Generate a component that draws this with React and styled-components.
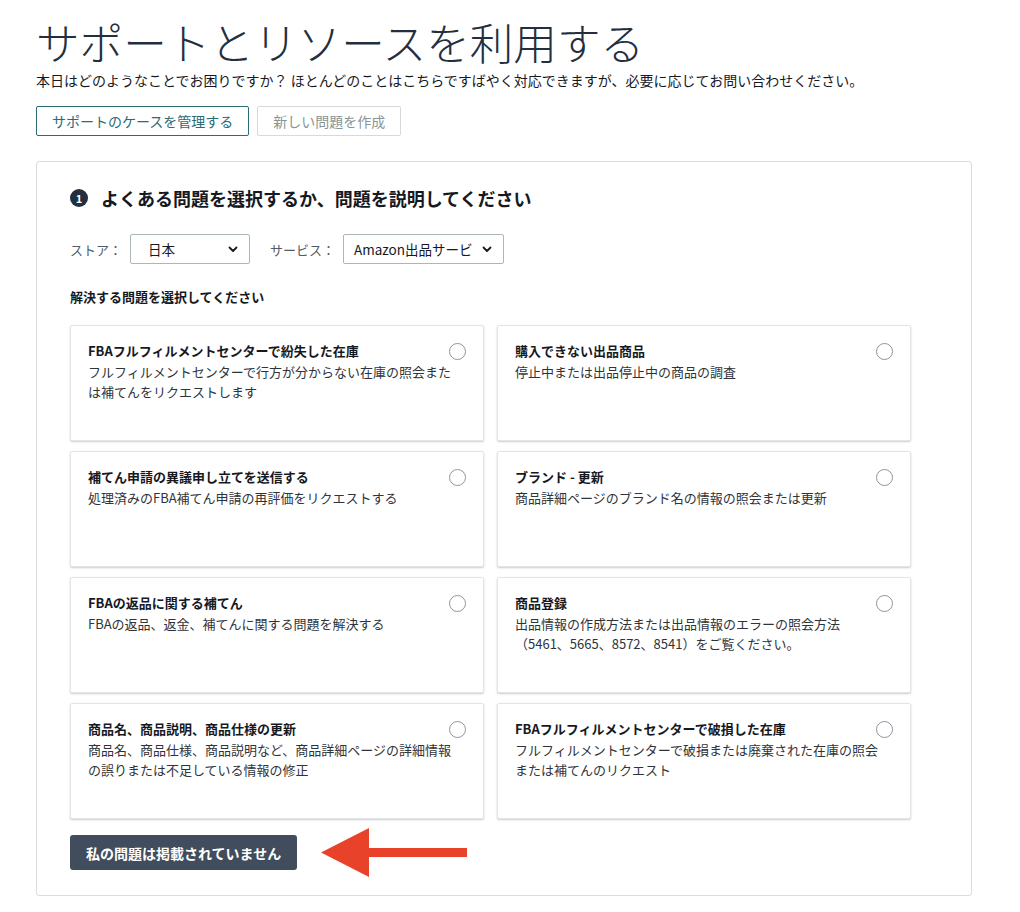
import React from "react";
import styled, { createGlobalStyle } from "styled-components";

const Global = createGlobalStyle`
  html, body { margin: 0; padding: 0; background: #ffffff; }
  body {
    font-family: "Noto Sans CJK JP", "Noto Sans", sans-serif;
    color: #16191f;
  }
  * { box-sizing: border-box; }
`;

const Page = styled.div`
  padding: 16px 48px 16px 36px;
  width: 1020px;
`;

const Title = styled.h1`
  margin: 0;
  font-size: 43.6px;
  line-height: 50px;
  font-weight: 300;
  color: #232f3e;
  letter-spacing: 0;
`;

const Lead = styled.p`
  margin: 4px 0 0;
  font-size: 14px;
  line-height: 20px;
  color: #16191f;
  white-space: nowrap;
`;

const ButtonRow = styled.div`
  display: flex;
  gap: 8px;
  margin-top: 16px;
`;

const OutlineButton = styled.button`
  height: 30px;
  padding: 0 15px;
  background: #fff;
  font-family: inherit;
  font-size: 14px;
  border-radius: 2px;
  border: 1px solid ${(p) => (p.$muted ? "#d5dbdb" : "#2a6b76")};
  color: ${(p) => (p.$muted ? "#879596" : "#2a6b76")};
  cursor: pointer;
`;

const Panel = styled.section`
  margin-top: 25px;
  border: 1px solid #d8dcde;
  border-radius: 3px;
  padding: 24px 33px 18px 33px;
  width: 936px;
`;

const StepHeading = styled.h2`
  margin: 0;
  display: flex;
  align-items: center;
  gap: 13px;
  font-size: 18px;
  line-height: 24px;
  font-weight: 700;
  color: #16191f;
`;

const StepBadge = styled.span`
  width: 18px;
  height: 18px;
  border-radius: 50%;
  background: #232f3e;
  color: #fff;
  font-size: 11px;
  font-weight: 700;
  display: inline-flex;
  align-items: center;
  justify-content: center;
  line-height: 1;
`;

const FilterRow = styled.div`
  display: flex;
  align-items: center;
  margin-top: 24px;
  gap: 20px;
`;

const Field = styled.label`
  display: flex;
  align-items: center;
  gap: 8px;
  font-size: 13px;
  color: #545b64;
`;

const Select = styled.div`
  width: ${(p) => p.$w}px;
  height: 30px;
  border: 1px solid #aab7b8;
  border-radius: 2px;
  display: flex;
  align-items: center;
  justify-content: space-between;
  padding: 0 11px 0 ${(p) => p.$pl}px;
  font-size: 13.5px;
  color: #16191f;
  white-space: nowrap;
  overflow: hidden;
`;

const SectionLabel = styled.div`
  margin-top: 23px;
  font-size: 13px;
  line-height: 20px;
  font-weight: 700;
  color: #16191f;
`;

const Grid = styled.div`
  margin-top: 18px;
  width: 841px;
  display: grid;
  grid-template-columns: 414px 414px;
  column-gap: 13px;
  row-gap: 10px;
`;

const Card = styled.div`
  position: relative;
  height: 116px;
  background: #fff;
  border: 1px solid #e3e6e8;
  border-radius: 2px;
  box-shadow: 0 1px 2px rgba(0, 28, 36, 0.22);
  padding: 15px 20px 12px 17px;
`;

const CardTitle = styled.div`
  font-size: 13px;
  line-height: 20px;
  font-weight: 700;
  color: #16191f;
  padding-right: 24px;
`;

const CardText = styled.div`
  margin-top: 1px;
  font-size: 13px;
  line-height: 20px;
  color: #2f343a;
`;

const Radio = styled.span`
  position: absolute;
  top: 17px;
  right: 17px;
  width: 17px;
  height: 17px;
  border-radius: 50%;
  border: 1.5px solid #8d959d;
  background: #fff;
`;

const BottomRow = styled.div`
  display: flex;
  align-items: center;
  gap: 24px;
  margin-top: 9px;
`;

const PrimaryButton = styled.button`
  height: 35px;
  padding: 0 16px;
  border: none;
  border-radius: 3px;
  background: #414d5c;
  color: #fff;
  font-family: inherit;
  font-size: 14px;
  font-weight: 700;
  cursor: pointer;
`;

const Chevron = () => (
  <svg width="10" height="7" viewBox="0 0 10 7" fill="none">
    <path d="M1.5 1.5 L5 5 L8.5 1.5" stroke="#16191f" strokeWidth="1.8" strokeLinecap="round" strokeLinejoin="round" />
  </svg>
);

const Arrow = () => (
  <svg width="146" height="49" viewBox="0 0 146 49">
    <polygon points="0,24.5 48,0 48,20 146,20 146,29 48,29 48,49" fill="#e8432a" />
  </svg>
);

const issues = [
  { t: "FBAフルフィルメントセンターで紛失した在庫", d: "フルフィルメントセンターで行方が分からない在庫の照会または補てんをリクエストします" },
  { t: "購入できない出品商品", d: "停止中または出品停止中の商品の調査" },
  { t: "補てん申請の異議申し立てを送信する", d: "処理済みのFBA補てん申請の再評価をリクエストする" },
  { t: "ブランド - 更新", d: "商品詳細ページのブランド名の情報の照会または更新" },
  { t: "FBAの返品に関する補てん", d: "FBAの返品、返金、補てんに関する問題を解決する" },
  { t: "商品登録", d: "出品情報の作成方法または出品情報のエラーの照会方法（5461、5665、8572、8541）をご覧ください。" },
  { t: "商品名、商品説明、商品仕様の更新", d: "商品名、商品仕様、商品説明など、商品詳細ページの詳細情報の誤りまたは不足している情報の修正" },
  { t: "FBAフルフィルメントセンターで破損した在庫", d: "フルフィルメントセンターで破損または廃棄された在庫の照会または補てんのリクエスト" },
];

export default function App() {
  return (
    <>
      <Global />
      <Page>
        <Title>サポートとリソースを利用する</Title>
        <Lead>本日はどのようなことでお困りですか？ ほとんどのことはこちらですばやく対応できますが、必要に応じてお問い合わせください。</Lead>
        <ButtonRow>
          <OutlineButton>サポートのケースを管理する</OutlineButton>
          <OutlineButton $muted>新しい問題を作成</OutlineButton>
        </ButtonRow>
        <Panel>
          <StepHeading>
            <StepBadge>1</StepBadge>
            よくある問題を選択するか、問題を説明してください
          </StepHeading>
          <FilterRow>
            <Field>
              ストア：
              <Select $w={120} $pl={17}>
                <span>日本</span>
                <Chevron />
              </Select>
            </Field>
            <Field>
              サービス：
              <Select $w={161} $pl={10}>
                <span>Amazon出品サービ</span>
                <Chevron />
              </Select>
            </Field>
          </FilterRow>
          <SectionLabel>解決する問題を選択してください</SectionLabel>
          <Grid>
            {issues.map((it) => (
              <Card key={it.t}>
                <CardTitle>{it.t}</CardTitle>
                <CardText>{it.d}</CardText>
                <Radio />
              </Card>
            ))}
          </Grid>
          <BottomRow>
            <PrimaryButton>私の問題は掲載されていません</PrimaryButton>
            <Arrow />
          </BottomRow>
        </Panel>
      </Page>
    </>
  );
}
